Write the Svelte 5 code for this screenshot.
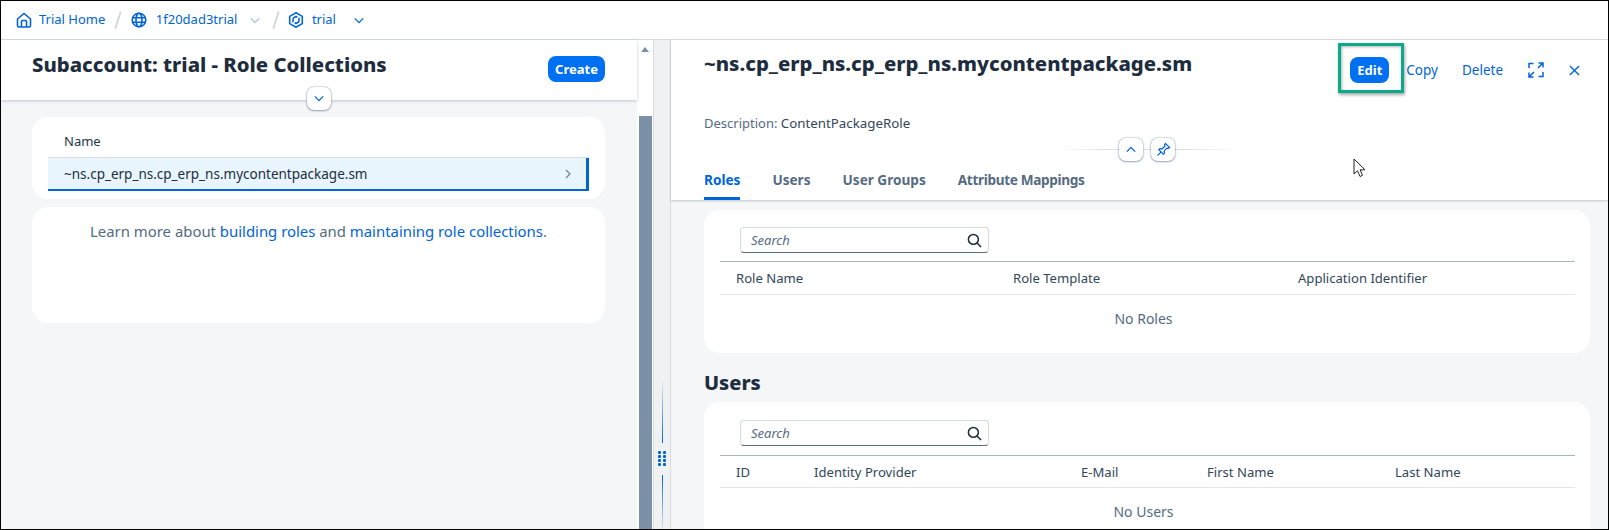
<script>
	const roleCols = ['Role Name', 'Role Template', 'Application Identifier'];
	const userCols = ['ID', 'Identity Provider', 'E-Mail', 'First Name', 'Last Name'];
</script>

<div class="page">
	<nav class="crumbs">
		<svg class="ic" viewBox="0 0 16 16"><path d="M1.500 7 8 1.500 14.500 7v6.500a1.500 1.500 0 0 1-1.500 1.500H3a1.500 1.500 0 0 1-1.500-1.500z M5.500 15V9.500a1 1 0 0 1 1-1h3a1 1 0 0 1 1 1V15" /></svg>
		<a class="home">Trial Home</a>
		<i class="sep"></i>
		<svg class="ic" viewBox="0 0 16 16"><circle cx="8" cy="8" r="6.800" /><ellipse cx="8" cy="8" rx="3" ry="6.800" /><path d="M1.500 5.800h13M1.500 10.200h13" /></svg>
		<a class="sub">1f20dad3trial</a>
		<svg class="chev pale" viewBox="0 0 12 8"><path d="M1 1.500 6 6.500 11 1.500" /></svg>
		<i class="sep second"></i>
		<svg class="ic" viewBox="0 0 16 16"><path d="M8 .8 14.300 4.400V11.600L8 15.200 1.700 11.600V4.400z" /><path d="M5 6.200 8 4.500l3 1.700v3.300M11 9.800 8 11.500 5 9.800V6.500" stroke-dasharray="5 1.500" /></svg>
		<a class="trial">trial</a>
		<svg class="chev" viewBox="0 0 12 8"><path d="M1 1.500 6 6.500 11 1.500" /></svg>
	</nav>

	<div class="panes">
		<section class="left">
			<header class="left-head">
				<h1>Subaccount: trial - Role Collections</h1>
				<button class="primary create">Create</button>
				<button class="round collapse" aria-label="Expand">
					<svg class="chev small" viewBox="0 0 12 8"><path d="M1 1.500 6 6.500 11 1.500" /></svg>
				</button>
			</header>
			<div class="left-body">
				<div class="card names">
					<div class="name-head">Name</div>
					<div class="name-row">
						<span>~ns.cp_erp_ns.cp_erp_ns.mycontentpackage.sm</span>
						<svg class="row-arrow" viewBox="0 0 6 10"><path d="M1 1 5 5 1 9" /></svg>
					</div>
				</div>
				<div class="card learn">
					Learn more about <a>building roles</a> and <a>maintaining role collections</a>.
				</div>
			</div>
		</section>

		<div class="scrollbar">
			<i class="up"></i>
			<i class="thumb"></i>
		</div>

		<div class="splitter">
			<i class="line top"></i>
			<span class="grip">
				{#each Array(8) as _}<b></b>{/each}
			</span>
			<i class="line bottom"></i>
		</div>

		<section class="right">
			<header class="right-head">
				<div class="title-row">
					<h2>~ns.cp_erp_ns.cp_erp_ns.mycontentpackage.sm</h2>
					<div class="actions">
						<button class="primary edit">Edit</button>
						<a class="copy">Copy</a>
						<a class="delete">Delete</a>
						<svg class="ic expand" viewBox="0 0 16 16"><path d="M1 6V1.500h4.500M10.500 1H15V5.500M15 1 10 6M15 10v4.500h-4.500M5.500 15H1V10.500M1 15l5-5" /></svg>
						<svg class="ic close" viewBox="0 0 12 12"><path d="M1 1 11 11M11 1 1 11" /></svg>
					</div>
				</div>
				<p class="desc">Description: <span>ContentPackageRole</span></p>
				<div class="divider">
					<button class="round" aria-label="Collapse">
						<svg class="chev small" viewBox="0 0 12 8"><path d="M1 6.500 6 1.500 11 6.500" /></svg>
					</button>
					<button class="round" aria-label="Pin">
						<svg class="pin" viewBox="0 0 16 16"><path d="M10 1.500 14.500 6 13 6.800 11.500 6.500 8.800 9.500 9 12 7.800 13 3 8.200 4 7 6.500 7.200 9.500 4.500 9.200 3zM5.200 10.800 1.500 14.500" /></svg>
					</button>
				</div>
				<div class="tabs">
					<a class="active">Roles</a>
					<a>Users</a>
					<a>User Groups</a>
					<a class="long">Attribute Mappings</a>
				</div>
			</header>

			<div class="right-body">
				<div class="card block roles">
					<div class="search">
						<em>Search</em>
						<svg viewBox="0 0 16 16"><circle cx="6.800" cy="6.800" r="5.300" /><path d="M10.700 10.700 15 15" /></svg>
					</div>
					<div class="thead role-cols">
						{#each roleCols as c}<span>{c}</span>{/each}
					</div>
					<div class="empty">No Roles</div>
				</div>

				<h3>Users</h3>

				<div class="card block users">
					<div class="search">
						<em>Search</em>
						<svg viewBox="0 0 16 16"><circle cx="6.800" cy="6.800" r="5.300" /><path d="M10.700 10.700 15 15" /></svg>
					</div>
					<div class="thead user-cols">
						{#each userCols as c}<span>{c}</span>{/each}
					</div>
					<div class="empty">No Users</div>
				</div>
			</div>
		</section>
	</div>

	<div class="highlight"></div>
	<svg class="cursor" viewBox="0 0 14 20"><path d="M1 1V16L4.500 12.800 7 18.500 9.500 17.300 7.200 11.800H12z" /></svg>
</div>

<style>
	:global(body) {
		margin: 0;
		background: #fff;
	}
	.page {
		position: relative;
		box-sizing: border-box;
		width: 1609px;
		height: 530px;
		border: 1px solid #000;
		display: flex;
		flex-direction: column;
		overflow: hidden;
		font-family: "Noto Sans", "Liberation Sans", sans-serif;
		font-size: 14px;
		color: #1d2d3e;
	}
	a {
		color: #0064d9;
	}
	svg {
		fill: none;
		stroke: #0064d9;
		stroke-width: 1.400;
	}

	/* breadcrumb */
	.crumbs {
		height: 38px;
		flex: none;
		box-sizing: content-box;
		display: flex;
		align-items: center;
		padding-left: 15px;
		border-bottom: 1px solid #d9dcdf;
		font-size: 13px;
	}
	.crumbs a {
		position: relative;
		top: -1px;
	}
	.crumbs .ic {
		stroke-width: 1.600;
	}
	.ic {
		width: 16px;
		height: 16px;
		flex: none;
	}
	.home {
		margin-left: 7px;
	}
	.sep {
		width: 1.500px;
		height: 18px;
		margin: 0 12px 0 12px;
		background: #d5d9dd;
		transform: rotate(18deg);
	}
	.sep.second {
		margin: 0 11px 0 15px;
	}
	.sub {
		margin-left: 9px;
	}
	.trial {
		margin-left: 8px;
	}
	.chev {
		width: 10px;
		height: 7px;
		margin-left: 13px;
		stroke-width: 1.500;
	}
	.chev.pale {
		stroke: #9dbfe8;
	}
	.trial + .chev {
		margin-left: 18px;
	}
	.chev.small {
		margin: 0;
		display: block;
	}

	/* panes */
	.panes {
		flex: 1;
		min-height: 0;
		display: flex;
	}
	.left {
		width: 636px;
		flex: none;
		display: flex;
		flex-direction: column;
		background: #f5f6f7;
	}
	.left-head {
		position: relative;
		height: 60px;
		flex: none;
		box-sizing: border-box;
		display: flex;
		justify-content: space-between;
		padding: 12px 32px 0 31px;
		background: #fff;
		box-shadow: 0 1px 3px rgba(85, 107, 130, 0.35);
	}
	h1, h2 {
		margin: 0;
		font-size: 20.300px;
		font-weight: 800;
		line-height: 24px;
	}
	h2 {
		margin-top: -1px;
	}
	button {
		font: inherit;
		border: 0;
		padding: 0;
	}
	.primary {
		height: 26px;
		border-radius: 8px;
		background: #0070f2;
		color: #fff;
		font-weight: 700;
		font-size: 13px;
	}
	.create {
		width: 57px;
		margin-top: 4px;
	}
	.round {
		width: 24px;
		height: 23px;
		display: flex;
		align-items: center;
		justify-content: center;
		background: #fff;
		border-radius: 7px;
		box-shadow: 0 0 2px rgba(85, 107, 130, 0.7), 0 1px 2px rgba(85, 107, 130, 0.45);
	}
	.collapse {
		position: absolute;
		left: 306px;
		top: 47px;
	}
	.left-body {
		flex: 1;
		padding: 17px 32px 0 31px;
		display: flex;
		flex-direction: column;
		gap: 8px;
	}
	.card {
		background: #fff;
		border-radius: 16px;
	}
	.names {
		height: 82px;
		box-sizing: border-box;
		padding: 0 16px;
	}
	.name-head {
		height: 41px;
		box-sizing: border-box;
		padding: 15px 0 0 16px;
		font-size: 13px;
		line-height: 18px;
		color: #223548;
		border-bottom: 1px solid #d9dfe4;
	}
	.name-row {
		box-sizing: border-box;
		height: 33px;
		display: flex;
		align-items: center;
		justify-content: space-between;
		padding: 1px 15px 0 16px;
		background: #e8f5fd;
		border-right: 3px solid #0064d9;
		border-bottom: 2px solid #0064d9;
		font-size: 13.500px;
	}
	.row-arrow {
		width: 6px;
		height: 10px;
		stroke: #6a7d90;
		stroke-width: 1.100;
	}
	.learn {
		height: 116px;
		box-sizing: border-box;
		padding-top: 14px;
		text-align: center;
		font-size: 14.900px;
		color: #556b82;
		line-height: 20px;
	}

	/* scrollbar */
	.scrollbar {
		width: 17px;
		flex: none;
		box-sizing: border-box;
		padding: 7px 2px 0;
		background: #fff;
		border-right: 1px solid #d9dcdf;
		display: flex;
		flex-direction: column;
		align-items: center;
	}
	.up {
		width: 0;
		height: 0;
		border: 4px solid transparent;
		border-top: 0;
		border-bottom: 5px solid #7b91a8;
	}
	.thumb {
		width: 13px;
		flex: 1;
		margin-top: 64px;
		background: #7b91a8;
	}

	/* splitter */
	.splitter {
		width: 17px;
		flex: none;
		box-sizing: border-box;
		background: #eff1f2;
		border-right: 1px solid #d9dcdf;
		display: flex;
		flex-direction: column;
		align-items: center;
		justify-content: flex-end;
	}
	.line {
		width: 1px;
		background: linear-gradient(to bottom, rgba(0, 100, 217, 0), #0064d9);
	}
	.line.top {
		height: 64px;
	}
	.line.bottom {
		height: 54px;
		background: linear-gradient(to top, rgba(0, 100, 217, 0.1), #0064d9);
	}
	.grip {
		display: grid;
		grid-template-columns: 3px 3px;
		grid-auto-rows: 3px;
		gap: 1px 2px;
		margin: 8px 0;
		padding-bottom: 1px;
	}
	.grip b {
		background: #0064d9;
		border-radius: 1px;
	}

	/* right pane */
	.right {
		flex: 1;
		min-width: 0;
		display: flex;
		flex-direction: column;
		background: #f5f6f7;
	}
	.right-head {
		height: 160px;
		flex: none;
		box-sizing: border-box;
		background: #fff;
		padding: 12px 0 0 33px;
		display: flex;
		flex-direction: column;
		box-shadow: 0 1px 2px rgba(85, 107, 130, 0.35);
		position: relative;
	}
	.title-row {
		display: flex;
		justify-content: space-between;
	}
	.actions {
		display: flex;
		align-items: center;
		height: 26px;
		padding-right: 28px;
		margin-top: 5px;
		font-size: 13.500px;
	}
	.edit {
		width: 39px;
	}
	.copy {
		margin-left: 17px;
	}
	.delete {
		margin-left: 24px;
	}
	.actions .ic {
		stroke-width: 1.500;
	}
	.expand {
		margin-left: 25px;
	}
	.actions .close {
		width: 11px;
		height: 11px;
		margin-left: 25px;
	}
	.desc {
		margin: 31px 0 0;
		font-size: 13px;
		line-height: 18px;
		color: #556b82;
	}
	.desc span {
		color: #32465a;
		font-size: 13.300px;
	}
	.divider {
		position: absolute;
		left: 386px;
		top: 97px;
		width: 180px;
		height: 24px;
		display: flex;
		gap: 8px;
		justify-content: center;
		align-items: center;
		background: linear-gradient(to right, rgba(217, 220, 223, 0), #d9dcdf 30%, #d9dcdf 70%, rgba(217, 220, 223, 0)) center / 100% 1px no-repeat;
	}
	.pin {
		width: 15px;
		height: 15px;
		stroke-width: 1.300;
	}
	.tabs {
		display: flex;
		gap: 32px;
		margin-top: auto;
		font-weight: 700;
		font-size: 13.600px;
		line-height: 20px;
	}
	.tabs a {
		color: #556b82;
		padding-bottom: 10px;
	}
	.tabs a.active {
		color: #0064d9;
		box-shadow: inset 0 -3px 0 #0064d9;
	}
	.tabs a.long {
		letter-spacing: -0.340px;
	}
	.right-body {
		flex: 1;
		min-height: 0;
		padding: 10px 18px 0 33px;
	}
	.block {
		padding: 17px 15px 0 16px;
		height: 143px;
		box-sizing: border-box;
	}
	.users {
		border-radius: 16px 16px 0 0;
		height: 140px;
		padding-top: 18px;
	}
	.search {
		box-sizing: border-box;
		margin-left: 20px;
		width: 249px;
		height: 26px;
		display: flex;
		align-items: center;
		justify-content: space-between;
		padding: 0 6px 0 10px;
		background: #fff;
		border: 1px solid #d5dadd;
		border-bottom-color: #556b82;
		border-radius: 4px;
	}
	.search em {
		font-size: 13px;
		color: #556b82;
	}
	.search svg {
		width: 15px;
		height: 15px;
		stroke: #1d2d3e;
		stroke-width: 1.600;
	}
	.thead {
		margin-top: 8px;
		height: 34px;
		box-sizing: border-box;
		display: grid;
		align-items: center;
		padding-left: 16px;
		font-size: 13.100px;
		color: #32465a;
		border-top: 1px solid #a9b4be;
		border-bottom: 1px solid #e5e5e5;
	}
	.users .thead {
		margin-top: 9px;
		height: 33px;
	}
	.role-cols {
		grid-template-columns: 277px 285px 1fr;
	}
	.user-cols {
		grid-template-columns: 78px 267px 126px 188px 1fr;
	}
	.empty {
		text-align: center;
		line-height: 18px;
		color: #556b82;
		padding: 15px 8px 0 0;
	}
	h3 {
		margin: 0;
		padding: 17px 0 7px;
		font-size: 20px;
		font-weight: 800;
		line-height: 25px;
	}

	/* annotation overlays */
	.highlight {
		position: absolute;
		left: 1337px;
		top: 42px;
		width: 60px;
		height: 44px;
		border: 3px solid #0aa98a;
		box-shadow: 1px 2px 3px rgba(0, 0, 0, 0.35), inset 1px 1px 3px rgba(0, 0, 0, 0.3);
	}
	.cursor {
		position: absolute;
		left: 1352px;
		top: 157px;
		width: 14px;
		height: 20px;
		fill: #fff;
		stroke: #222;
		stroke-width: 1;
	}
</style>
